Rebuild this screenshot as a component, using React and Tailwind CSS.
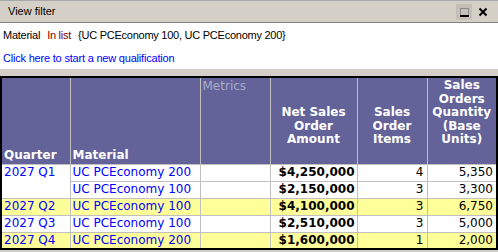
import React from 'react';

const ROWS = [
    { quarter: '2027 Q1', span: 2, material: 'UC PCEconomy 200', net: '$4,250,000', items: '4', qty: '5,350', hi: false },
    { material: 'UC PCEconomy 100', net: '$2,150,000', items: '3', qty: '3,300', hi: false },
    { quarter: '2027 Q2', span: 1, material: 'UC PCEconomy 100', net: '$4,100,000', items: '3', qty: '6,750', hi: true },
    { quarter: '2027 Q3', span: 1, material: 'UC PCEconomy 100', net: '$2,510,000', items: '3', qty: '5,000', hi: false },
    { quarter: '2027 Q4', span: 1, material: 'UC PCEconomy 200', net: '$1,600,000', items: '1', qty: '2,000', hi: true },
];

function RestoreIcon() {
    return (
        <svg width="16" height="16" viewBox="0 0 16 16" className="bg-[#c4c0b8]">
            <rect x="4.5" y="4.5" width="8" height="8" fill="none" stroke="#555" strokeDasharray="1 1" />
            <rect x="4" y="11" width="9" height="2" fill="#000" />
        </svg>
    );
}

function CloseIcon() {
    return (
        <svg width="10" height="10" viewBox="0 0 10 10">
            <path d="M1.5 1.5 L8.5 8.5 M8.5 1.5 L1.5 8.5" stroke="#000" strokeWidth="2" />
        </svg>
    );
}

export default function App() {
    const head = "bg-[#636399] border border-[#c0c0c0] text-white font-bold text-[12px] leading-[13.5px] align-bottom";
    const cell = "border border-[#c0c0c0] h-[17px] p-0 text-[12px] leading-[15px]";

    return (
        <div className="w-[498px] h-[252px] bg-[#d4d0c8] flex flex-col overflow-hidden font-['Liberation_Sans',sans-serif]">
            <div className="h-[23px] flex items-center justify-between border-t border-[#a8a8a8] border-b border-b-[#808080] pl-2 pr-[10px] text-[11px] text-black">
                <span>View filter</span>
                <div className="flex items-center gap-[6px]">
                    <RestoreIcon />
                    <CloseIcon />
                </div>
            </div>

            <div className="bg-white h-[46px] flex flex-col px-[3px] pt-[5px] text-[11px] leading-[14px]">
                <div className="flex gap-[7px] tracking-[-0.25px]">
                    <span className="text-black">Material</span>
                    <span className="text-[#800000]">In list</span>
                    <span className="text-black">{'{UC PCEconomy 100, UC PCEconomy 200}'}</span>
                </div>
                <div className="mt-[9px] text-[#0000ff] tracking-[-0.2px]">Click here to start a new qualification</div>
            </div>

            <div className="h-[7px]" />

            <table className="table-fixed border-collapse w-[496px] border-2 border-black font-['DejaVu_Sans',sans-serif]">
                <colgroup>
                    <col className="w-[69px]" />
                    <col className="w-[130px]" />
                    <col className="w-[70px]" />
                    <col className="w-[87px]" />
                    <col className="w-[70px]" />
                    <col className="w-[70px]" />
                </colgroup>
                <thead>
                    <tr className="h-[87px]">
                        <th className={`${head} text-left pl-[2px] pb-[1px] leading-[15px]`}>Quarter</th>
                        <th className={`${head} text-left pl-[2px] pb-[1px] leading-[15px]`}>Material</th>
                        <th className="bg-[#636399] border-t border-[#c0c0c0] align-top text-left pl-[2px] pt-[1px] font-normal text-[12px] leading-[14px] text-[#a9a9c9]">Metrics</th>
                        <th className={`${head} text-center pb-[17px]`}>Net Sales<br />Order<br />Amount</th>
                        <th className={`${head} text-center pb-[17px]`}>Sales<br />Order<br />Items</th>
                        <th className={`${head} text-center pb-[17px]`}>Sales<br />Orders<br />Quantity<br />(Base<br />Units)</th>
                    </tr>
                </thead>
                <tbody>
                    {ROWS.map((r, i) => {
                        const bg = r.hi ? 'bg-[#ffff99]' : 'bg-white';
                        return (
                            <tr key={i} className={bg}>
                                {r.quarter && (
                                    <td rowSpan={r.span} className={`${cell} align-top pl-[2px] text-[#0000ff]`}>{r.quarter}</td>
                                )}
                                <td className={`${cell} pl-[2px] text-[#0000ff]`}>{r.material}</td>
                                <td className={cell} />
                                <td className={`${cell} text-right pr-[2px] font-bold text-black`}>{r.net}</td>
                                <td className={`${cell} text-right pr-[3px] text-black`}>{r.items}</td>
                                <td className={`${cell} text-right pr-[3px] text-black`}>{r.qty}</td>
                            </tr>
                        );
                    })}
                </tbody>
            </table>
        </div>
    );
}
